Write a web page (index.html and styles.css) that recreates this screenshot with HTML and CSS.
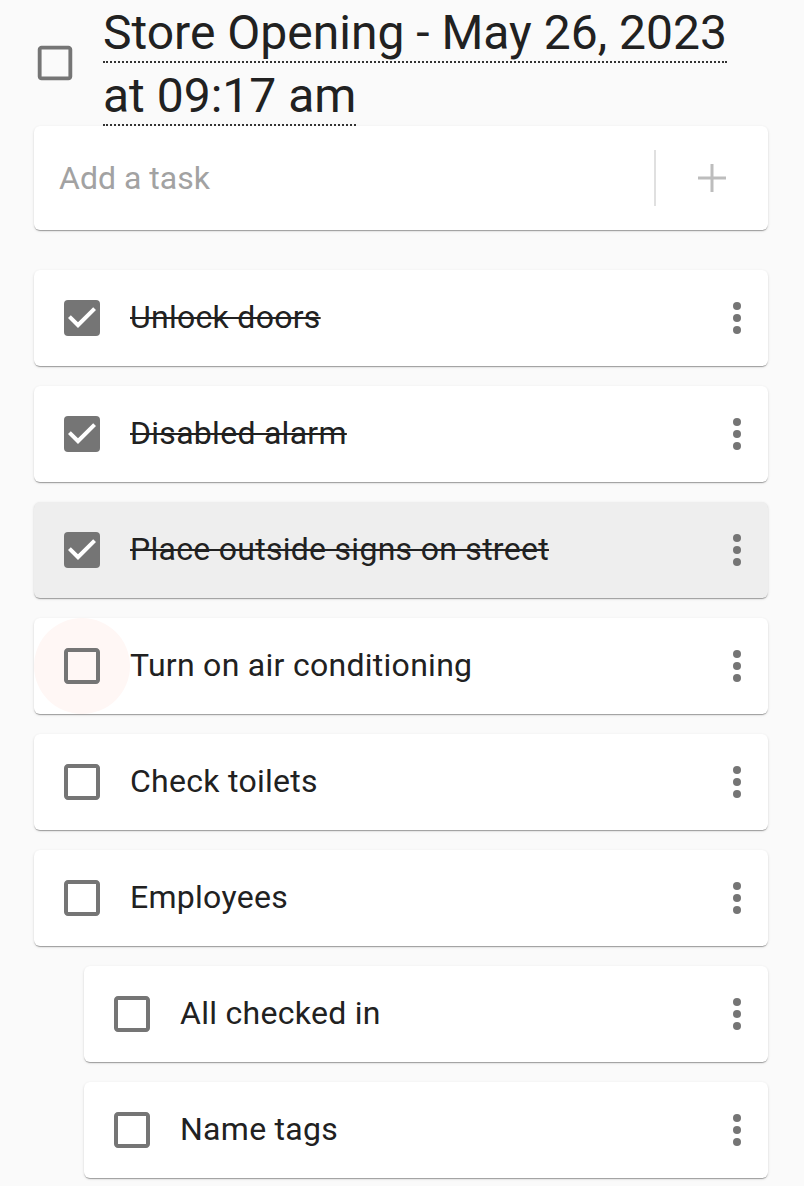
FILE: index.html
```html
<!DOCTYPE html>
<html>
<head>
<meta charset="utf-8">
<link rel="stylesheet" href="styles.css">
</head>
<body>
<div class="page">
  <div class="header">
    <svg class="cb cb-head" viewBox="0 0 24 24"><path d="M19 5v14H5V5h14m0-2H5c-1.1 0-2 .9-2 2v14c0 1.1.9 2 2 2h14c1.1 0 2-.9 2-2V5c0-1.1-.9-2-2-2z"/></svg>
    <h1 class="title"><span class="title-text">Store Opening - May 26, 2023 at 09:17 am</span></h1>
  </div>

  <div class="add-card">
    <div class="add-input">Add a task</div>
    <div class="add-btn">
      <svg class="plus" viewBox="0 0 28 28"><path d="M14 0v28M0 14h28"/></svg>
    </div>
  </div>

  <div class="list">
    <div class="task done">
      <svg class="cb" viewBox="0 0 24 24"><rect x="3" y="3" width="18" height="18" rx="2" fill="#757575"/><path d="M10 17l-5-5 1.41-1.41L10 14.17l7.59-7.59L19 8z" fill="#fff"/></svg>
      <span class="label">Unlock doors</span>
      <svg class="more" viewBox="0 0 24 24"><circle cx="12" cy="6" r="2"/><circle cx="12" cy="12" r="2"/><circle cx="12" cy="18" r="2"/></svg>
    </div>
    <div class="task done">
      <svg class="cb" viewBox="0 0 24 24"><rect x="3" y="3" width="18" height="18" rx="2" fill="#757575"/><path d="M10 17l-5-5 1.41-1.41L10 14.17l7.59-7.59L19 8z" fill="#fff"/></svg>
      <span class="label">Disabled alarm</span>
      <svg class="more" viewBox="0 0 24 24"><circle cx="12" cy="6" r="2"/><circle cx="12" cy="12" r="2"/><circle cx="12" cy="18" r="2"/></svg>
    </div>
    <div class="task done hover">
      <svg class="cb" viewBox="0 0 24 24"><rect x="3" y="3" width="18" height="18" rx="2" fill="#757575"/><path d="M10 17l-5-5 1.41-1.41L10 14.17l7.59-7.59L19 8z" fill="#fff"/></svg>
      <span class="label">Place outside signs on street</span>
      <svg class="more" viewBox="0 0 24 24"><circle cx="12" cy="6" r="2"/><circle cx="12" cy="12" r="2"/><circle cx="12" cy="18" r="2"/></svg>
    </div>
    <div class="task">
      <span class="ripple"></span>
      <svg class="cb" viewBox="0 0 24 24"><path d="M19 5v14H5V5h14m0-2H5c-1.1 0-2 .9-2 2v14c0 1.1.9 2 2 2h14c1.1 0 2-.9 2-2V5c0-1.1-.9-2-2-2z"/></svg>
      <span class="label">Turn on air conditioning</span>
      <svg class="more" viewBox="0 0 24 24"><circle cx="12" cy="6" r="2"/><circle cx="12" cy="12" r="2"/><circle cx="12" cy="18" r="2"/></svg>
    </div>
    <div class="task">
      <svg class="cb" viewBox="0 0 24 24"><path d="M19 5v14H5V5h14m0-2H5c-1.1 0-2 .9-2 2v14c0 1.1.9 2 2 2h14c1.1 0 2-.9 2-2V5c0-1.1-.9-2-2-2z"/></svg>
      <span class="label">Check toilets</span>
      <svg class="more" viewBox="0 0 24 24"><circle cx="12" cy="6" r="2"/><circle cx="12" cy="12" r="2"/><circle cx="12" cy="18" r="2"/></svg>
    </div>
    <div class="task">
      <svg class="cb" viewBox="0 0 24 24"><path d="M19 5v14H5V5h14m0-2H5c-1.1 0-2 .9-2 2v14c0 1.1.9 2 2 2h14c1.1 0 2-.9 2-2V5c0-1.1-.9-2-2-2z"/></svg>
      <span class="label">Employees</span>
      <svg class="more" viewBox="0 0 24 24"><circle cx="12" cy="6" r="2"/><circle cx="12" cy="12" r="2"/><circle cx="12" cy="18" r="2"/></svg>
    </div>
    <div class="task sub">
      <svg class="cb" viewBox="0 0 24 24"><path d="M19 5v14H5V5h14m0-2H5c-1.1 0-2 .9-2 2v14c0 1.1.9 2 2 2h14c1.1 0 2-.9 2-2V5c0-1.1-.9-2-2-2z"/></svg>
      <span class="label">All checked in</span>
      <svg class="more" viewBox="0 0 24 24"><circle cx="12" cy="6" r="2"/><circle cx="12" cy="12" r="2"/><circle cx="12" cy="18" r="2"/></svg>
    </div>
    <div class="task sub">
      <svg class="cb" viewBox="0 0 24 24"><path d="M19 5v14H5V5h14m0-2H5c-1.1 0-2 .9-2 2v14c0 1.1.9 2 2 2h14c1.1 0 2-.9 2-2V5c0-1.1-.9-2-2-2z"/></svg>
      <span class="label">Name tags</span>
      <svg class="more" viewBox="0 0 24 24"><circle cx="12" cy="6" r="2"/><circle cx="12" cy="12" r="2"/><circle cx="12" cy="18" r="2"/></svg>
    </div>
  </div>
</div>
</body>
</html>
```

FILE: styles.css
```css
html, body {
  margin: 0;
  padding: 0;
  background: #fafafa;
}
body {
  font-family: Roboto, "Noto Sans", sans-serif;
  color: #212121;
}
.page {
  padding: 0 36px 40px 34px;
}
.header {
  display: flex;
  align-items: center;
  height: 126px;
  margin-left: -2px;
}
.cb {
  width: 48px;
  height: 48px;
  flex: none;
  fill: #757575;
}
.cb-head {
  width: 46px;
  height: 46px;
  margin-right: 25px;
}
.title {
  margin: 0;
  font-size: 48px;
  font-weight: 400;
  line-height: 63px;
  flex: 1;
  margin-top: 1px;
}
.title-text {
  border-bottom: 2px dotted #333;
}
.add-card {
  display: flex;
  align-items: center;
  height: 104px;
  background: #fff;
  border-radius: 6px;
  box-shadow: 0 2px 1px -1px rgba(0,0,0,.2), 0 1px 1px 0 rgba(0,0,0,.14), 0 1px 3px 0 rgba(0,0,0,.12);
}
.add-input {
  flex: 1;
  padding-left: 25px;
  font-size: 32px;
  color: #a2a2a2;
}
.add-btn {
  width: 112px;
  height: 56px;
  border-left: 2px solid #e0e0e0;
  display: flex;
  align-items: center;
  justify-content: center;
}
.plus {
  width: 28px;
  height: 28px;
  stroke: #bdbdbd;
  stroke-width: 3;
  fill: none;
}
.list {
  display: flex;
  flex-direction: column;
  gap: 20px;
  margin-top: 40px;
}
.task {
  position: relative;
  overflow: hidden;
  display: flex;
  align-items: center;
  height: 96px;
  padding: 0 7px 0 24px;
  background: #fff;
  border-radius: 6px;
  box-shadow: 0 2px 1px -1px rgba(0,0,0,.2), 0 1px 1px 0 rgba(0,0,0,.14), 0 1px 3px 0 rgba(0,0,0,.12);
}
.task.sub {
  margin-left: 50px;
}
.task.hover {
  background: #eeeeee;
}
.ripple {
  position: absolute;
  left: 0;
  top: 0;
  width: 96px;
  height: 96px;
  border-radius: 50%;
  background: #fff7f5;
}
.task .cb {
  position: relative;
}
.label {
  position: relative;
  flex: 1;
  margin-left: 24px;
  margin-top: -2px;
  font-size: 32px;
  line-height: 40px;
  letter-spacing: 0.28px;
  color: #212121;
}
.done .label {
  text-decoration: line-through;
  text-decoration-thickness: 2px;
}
.more {
  width: 48px;
  height: 48px;
  fill: #757575;
  flex: none;
}
```
